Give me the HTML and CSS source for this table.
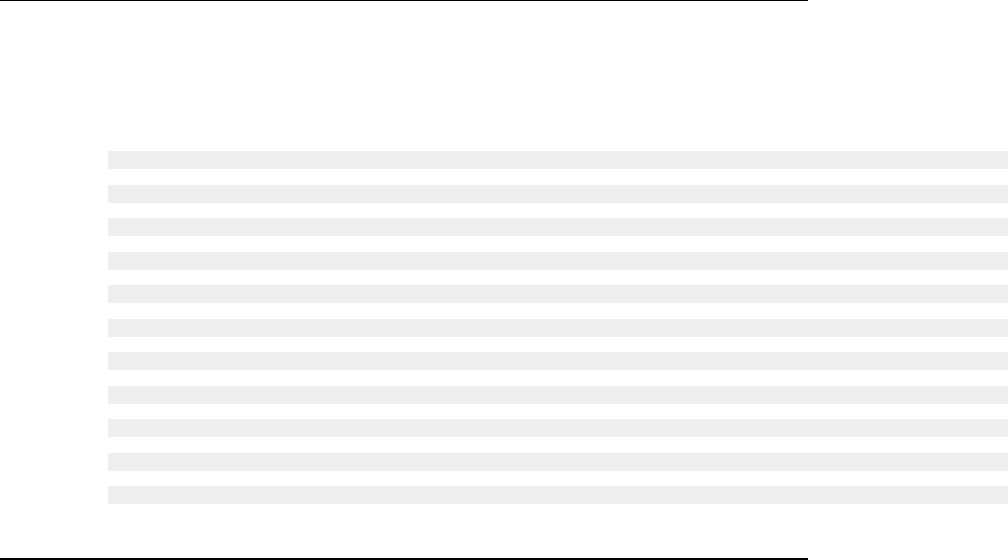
FILE: index.html
```html
<!DOCTYPE html>
<html lang="en">
<head>
    <meta charset="UTF-8">
    <meta name="viewport" content="width=device-width, initial-scale=1.0">
    <title>Loading</title>
    <link rel="stylesheet" href="styles.css">
</head>
<body>

<div class="frame">
    <div class="skeleton">
        <div class="line"></div>
        <div class="line"></div>
        <div class="line"></div>
        <div class="line"></div>
        <div class="line"></div>
        <div class="line"></div>
        <div class="line"></div>
        <div class="line"></div>
        <div class="line"></div>
        <div class="line"></div>
        <div class="line"></div>
    </div>
</div>

</body>
</html>
```
FILE: styles.css
```css
html, body {
    margin: 0;
    padding: 0;
    background-color: #fff;
    overflow: hidden;
    font-family: "Liberation Sans", Arial, sans-serif;
}
.frame {
    box-sizing: border-box;
    width: 808px;
    height: 560px;
    border-top: 1px solid #000;
    border-bottom: 2px solid #000;
    padding: 150px 0 0 108px;
}
.skeleton {
    display: flex;
    flex-direction: column;
    gap: 15.5px;
    width: 900px;
}
.line {
    height: 18px;
    background-color: #eeeeee;
}
```
